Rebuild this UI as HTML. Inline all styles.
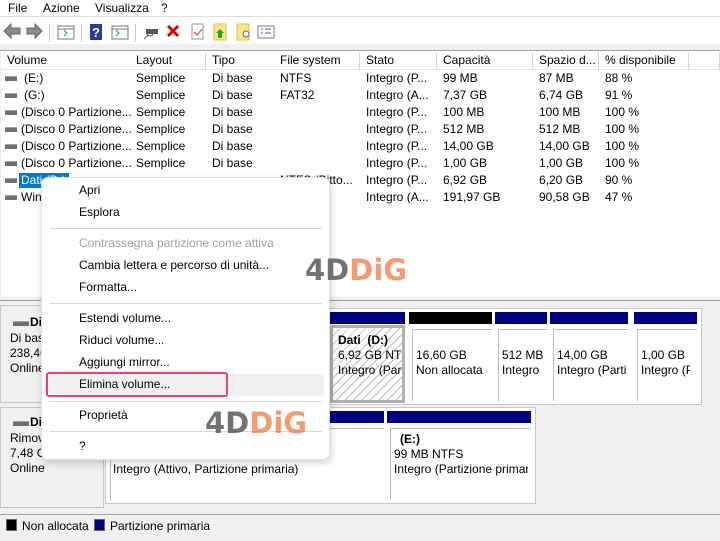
<!DOCTYPE html>
<html><head><meta charset="utf-8"><style>
*{margin:0;padding:0;box-sizing:border-box}
body{width:720px;height:541px;overflow:hidden;background:#f0f0f0;font-family:"Liberation Sans",sans-serif;font-size:12px;color:#000;position:relative}
.a{position:absolute;white-space:nowrap}
.hd{position:absolute;top:52px;height:18px;border-right:1px solid #d6d6d6;border-bottom:1px solid #e5e5e5;padding-left:6px;line-height:17px;background:#fff}
.drv{position:absolute;left:5px;width:12px;height:5px;background:#707070;border-top:1px solid #a0a0a0}
.mi{position:absolute;left:79px;font-size:12px}
.sep{position:absolute;left:50px;width:272px;height:1px;background:#d8d8d8}
.box{position:absolute;background:#fff;border:1px solid #a0a0a0;box-shadow:inset 1px 1px 0 #fff}
.part{position:absolute;background:#fff;border-left:1px solid #d0d0d0}
.nav{position:absolute;height:12px;background:#000080}
.wm{position:absolute;font-weight:bold;font-size:29px;letter-spacing:0px;font-family:"DejaVu Sans","Liberation Sans",sans-serif}
</style></head><body>
<!-- menu bar -->
<div class="a" style="left:0;top:0;width:720px;height:16px;background:#fff"></div>
<div class="a" style="left:8px;top:1px">File</div>
<div class="a" style="left:43px;top:1px">Azione</div>
<div class="a" style="left:95px;top:1px">Visualizza</div>
<div class="a" style="left:161px;top:1px">?</div>
<!-- toolbar -->
<div class="a" style="left:0;top:16px;width:720px;height:28px;background:#fff;border-top:1px solid #ddd"></div>
<svg class="a" style="left:0;top:18px" width="300" height="26">
<path d="M4 13 L11 6 L11 10 L20 10 L20 16 L11 16 L11 20 Z" fill="#8a8a8a" stroke="#666"/>
<path d="M42 13 L35 6 L35 10 L27 10 L27 16 L35 16 L35 20 Z" fill="#8a8a8a" stroke="#666"/>
<line x1="49.5" y1="6" x2="49.5" y2="24" stroke="#ccc"/>
<rect x="58" y="8" width="16" height="13" fill="#fff" stroke="#777"/><line x1="58" y1="11" x2="74" y2="11" stroke="#777"/><path d="M64 12 L67 15 L64 18" fill="none" stroke="#2a2"/>
<line x1="81.5" y1="6" x2="81.5" y2="24" stroke="#ccc"/>
<rect x="90" y="6" width="12" height="16" fill="#2a3a9a"/><text x="92" y="19" fill="#fff" font-size="13" font-weight="bold">?</text>
<rect x="112" y="8" width="16" height="13" fill="#fff" stroke="#777"/><line x1="112" y1="11" x2="128" y2="11" stroke="#777"/><path d="M116 12 L119 15 L116 18" fill="none" stroke="#2a2"/>
<line x1="135.5" y1="6" x2="135.5" y2="24" stroke="#ccc"/>
<rect x="146" y="11" width="12" height="5" fill="#555"/><circle cx="150" cy="15" r="3" fill="none" stroke="#468"/><line x1="148" y1="17" x2="144" y2="21" stroke="#555"/>
<path d="M168 8 L178 18 M178 8 L168 18" stroke="#d00" stroke-width="3"/>
<rect x="192" y="6" width="11" height="15" fill="#fff" stroke="#999"/><path d="M194 14 L197 17 L202 11" fill="none" stroke="#e55" stroke-width="1.3"/>
<rect x="214" y="6" width="12" height="16" fill="#fbe58a" stroke="#e0c040"/><path d="M220 11 L224 15 L222 15 L222 20 L218 20 L218 15 L216 15 Z" fill="#2a2"/>
<rect x="237" y="6" width="12" height="16" fill="#fbe58a" stroke="#e0c040"/><circle cx="246" cy="16" r="3" fill="#fff" stroke="#666"/>
<rect x="258" y="8" width="16" height="12" fill="#fff" stroke="#777"/><path d="M261 11 h2 M265 11 h6 M261 15 h2 M265 15 h6" stroke="#46a"/>
</svg>
<div class="a" style="left:0;top:44px;width:720px;height:7px;background:#f0f0f0;border-bottom:1px solid #a0a0a0"></div>
<!-- table -->
<div class="a" style="left:1px;top:51px;width:719px;height:246px;background:#fff"></div>
<div class="hd" style="left:1px;width:132px">Volume</div>
<div class="hd" style="left:130px;width:76px">Layout</div>
<div class="hd" style="left:206px;width:69px">Tipo</div>
<div class="hd" style="left:274px;width:86px">File system</div>
<div class="hd" style="left:360px;width:77px">Stato</div>
<div class="hd" style="left:437px;width:96px">Capacità</div>
<div class="hd" style="left:533px;width:66px">Spazio d...</div>
<div class="hd" style="left:599px;width:90px">% disponibile</div>
<div class="hd" style="left:689px;width:31px"></div>
<div class="a" style="left:0;top:70px;line-height:17px">
<div style="position:relative;height:17px"><div class="drv" style="top:6px"></div><span style="position:absolute;left:24px">(E:)</span><span style="position:absolute;left:136px">Semplice</span><span style="position:absolute;left:212px">Di base</span><span style="position:absolute;left:280px">NTFS</span><span style="position:absolute;left:366px">Integro (P...</span><span style="position:absolute;left:443px">99 MB</span><span style="position:absolute;left:539px">87 MB</span><span style="position:absolute;left:605px">88 %</span></div>
<div style="position:relative;height:17px"><div class="drv" style="top:6px"></div><span style="position:absolute;left:24px">(G:)</span><span style="position:absolute;left:136px">Semplice</span><span style="position:absolute;left:212px">Di base</span><span style="position:absolute;left:280px">FAT32</span><span style="position:absolute;left:366px">Integro (A...</span><span style="position:absolute;left:443px">7,37 GB</span><span style="position:absolute;left:539px">6,74 GB</span><span style="position:absolute;left:605px">91 %</span></div>
<div style="position:relative;height:17px"><div class="drv" style="top:6px"></div><span style="position:absolute;left:21px">(Disco 0 Partizione...</span><span style="position:absolute;left:136px">Semplice</span><span style="position:absolute;left:212px">Di base</span><span style="position:absolute;left:366px">Integro (P...</span><span style="position:absolute;left:443px">100 MB</span><span style="position:absolute;left:539px">100 MB</span><span style="position:absolute;left:605px">100 %</span></div>
<div style="position:relative;height:17px"><div class="drv" style="top:6px"></div><span style="position:absolute;left:21px">(Disco 0 Partizione...</span><span style="position:absolute;left:136px">Semplice</span><span style="position:absolute;left:212px">Di base</span><span style="position:absolute;left:366px">Integro (P...</span><span style="position:absolute;left:443px">512 MB</span><span style="position:absolute;left:539px">512 MB</span><span style="position:absolute;left:605px">100 %</span></div>
<div style="position:relative;height:17px"><div class="drv" style="top:6px"></div><span style="position:absolute;left:21px">(Disco 0 Partizione...</span><span style="position:absolute;left:136px">Semplice</span><span style="position:absolute;left:212px">Di base</span><span style="position:absolute;left:366px">Integro (P...</span><span style="position:absolute;left:443px">14,00 GB</span><span style="position:absolute;left:539px">14,00 GB</span><span style="position:absolute;left:605px">100 %</span></div>
<div style="position:relative;height:17px"><div class="drv" style="top:6px"></div><span style="position:absolute;left:21px">(Disco 0 Partizione...</span><span style="position:absolute;left:136px">Semplice</span><span style="position:absolute;left:212px">Di base</span><span style="position:absolute;left:366px">Integro (P...</span><span style="position:absolute;left:443px">1,00 GB</span><span style="position:absolute;left:539px">1,00 GB</span><span style="position:absolute;left:605px">100 %</span></div>
<div style="position:relative;height:17px"><div class="drv" style="top:6px"></div><span style="position:absolute;left:19px;top:1px;height:15px;line-height:15px;width:50px;background:#0078d7;color:#fff;padding-left:2px">Dati (D:)</span><span style="position:absolute;left:280px">NTFS (Bitto...</span><span style="position:absolute;left:366px">Integro (P...</span><span style="position:absolute;left:443px">6,92 GB</span><span style="position:absolute;left:539px">6,20 GB</span><span style="position:absolute;left:605px">90 %</span></div>
<div style="position:relative;height:17px"><div class="drv" style="top:6px"></div><span style="position:absolute;left:21px">Windows (C:)</span><span style="position:absolute;left:366px">Integro (A...</span><span style="position:absolute;left:443px">191,97 GB</span><span style="position:absolute;left:539px">90,58 GB</span><span style="position:absolute;left:605px">47 %</span></div>
</div>
<!-- divider -->
<div class="a" style="left:0;top:297px;width:720px;height:4px;background:#f0f0f0;border-bottom:1px solid #a0a0a0"></div>
<!-- disk 0 -->
<div class="a" style="left:0;top:305px;width:104px;height:98px;border:1px solid #c8c8c8;background:#f0f0f0"></div>
<div class="drv" style="left:13px;top:321px;width:16px"></div>
<div class="a" style="left:30px;top:315px;font-weight:bold">Disco 0</div>
<div class="a" style="left:10px;top:331px">Di base</div>
<div class="a" style="left:10px;top:346px">238,46 GB</div>
<div class="a" style="left:10px;top:361px">Online</div>
<div class="a" style="left:105px;top:308px;width:597px;height:97px;background:#fff;border:1px solid #c8c8c8"></div>
<div class="nav" style="left:107px;top:312px;width:298px"></div>
<div class="a" style="left:330px;top:325px;width:75px;height:78px;border:3px solid #b0b0b0;background:repeating-linear-gradient(135deg,#fff 0 5px,#bbb 5px 6px)"></div>
<div class="a" style="left:338px;top:333px;font-weight:bold">Dati&nbsp; (D:)</div>
<div class="a" style="left:338px;top:348px;width:64px;overflow:hidden">6,92 GB NTFS</div>
<div class="a" style="left:338px;top:363px;width:64px;overflow:hidden">Integro (Partizione</div>
<div class="nav" style="left:409px;top:312px;width:83px;background:#000"></div>
<div class="a" style="left:412px;top:329px;width:80px;height:72px;border:1px solid #bbb;border-right:none;border-bottom:none"></div>
<div class="a" style="left:416px;top:348px">16,60 GB</div>
<div class="a" style="left:416px;top:363px">Non allocata</div>
<div class="nav" style="left:495px;top:312px;width:52px"></div>
<div class="a" style="left:498px;top:329px;width:49px;height:72px;border:1px solid #bbb;border-right:none;border-bottom:none"></div>
<div class="a" style="left:502px;top:348px">512 MB</div>
<div class="a" style="left:502px;top:363px">Integro</div>
<div class="nav" style="left:550px;top:312px;width:78px"></div>
<div class="a" style="left:553px;top:329px;width:75px;height:72px;border:1px solid #bbb;border-right:none;border-bottom:none"></div>
<div class="a" style="left:557px;top:348px">14,00 GB</div>
<div class="a" style="left:557px;top:363px;width:70px;overflow:hidden">Integro (Partizione</div>
<div class="nav" style="left:634px;top:312px;width:63px"></div>
<div class="a" style="left:637px;top:329px;width:60px;height:72px;border:1px solid #bbb;border-right:none;border-bottom:none"></div>
<div class="a" style="left:641px;top:348px">1,00 GB</div>
<div class="a" style="left:641px;top:363px;width:49px;overflow:hidden">Integro (Partizione</div>
<!-- disk 1 -->
<div class="a" style="left:0;top:407px;width:104px;height:101px;border:1px solid #c8c8c8;background:#f0f0f0"></div>
<div class="drv" style="left:13px;top:421px;width:16px"></div>
<div class="a" style="left:30px;top:415px;font-weight:bold">Disco 1</div>
<div class="a" style="left:10px;top:431px">Rimovibile</div>
<div class="a" style="left:10px;top:446px">7,48 GB</div>
<div class="a" style="left:10px;top:461px">Online</div>
<div class="a" style="left:105px;top:407px;width:431px;height:97px;background:#fff;border:1px solid #c8c8c8"></div>
<div class="nav" style="left:107px;top:411px;width:277px"></div>
<div class="a" style="left:110px;top:428px;width:274px;height:72px;border:1px solid #bbb;border-right:none;border-bottom:none"></div>
<div class="a" style="left:113px;top:462px">Integro (Attivo, Partizione primaria)</div>
<div class="nav" style="left:387px;top:411px;width:144px"></div>
<div class="a" style="left:390px;top:428px;width:141px;height:72px;border:1px solid #bbb;border-right:none;border-bottom:none"></div>
<div class="a" style="left:400px;top:432px;font-weight:bold">(E:)</div>
<div class="a" style="left:394px;top:447px">99 MB NTFS</div>
<div class="a" style="left:394px;top:462px;width:134px;overflow:hidden">Integro (Partizione primaria)</div>
<!-- legend -->
<div class="a" style="left:0;top:514px;width:720px;height:1px;background:#a0a0a0"></div>
<div class="a" style="left:6px;top:519px;width:11px;height:12px;background:#000;border:1px solid #666"></div>
<div class="a" style="left:22px;top:519px">Non allocata</div>
<div class="a" style="left:94px;top:519px;width:11px;height:12px;background:#000080;border:1px solid #666"></div>
<div class="a" style="left:110px;top:519px">Partizione primaria</div>
<!-- context menu -->
<div class="a" style="left:41px;top:177px;width:289px;height:283px;background:#fff;border:1px solid #e2e2e2;border-radius:7px;box-shadow:1px 3px 8px rgba(0,0,0,.18)"></div>
<div class="mi" style="top:183px">Apri</div>
<div class="mi" style="top:205px">Esplora</div>
<div class="sep" style="top:228px"></div>
<div class="mi" style="top:236px;color:#a0a0a0">Contrassegna partizione come attiva</div>
<div class="mi" style="top:258px">Cambia lettera e percorso di unità...</div>
<div class="mi" style="top:280px">Formatta...</div>
<div class="sep" style="top:303px"></div>
<div class="mi" style="top:311px">Estendi volume...</div>
<div class="mi" style="top:333px">Riduci volume...</div>
<div class="mi" style="top:355px">Aggiungi mirror...</div>
<div class="a" style="left:48px;top:374px;width:276px;height:22px;background:#f0f0f0;border-radius:4px"></div>
<div class="a" style="left:46px;top:372px;width:182px;height:25px;border:2px solid #e8436a;border-radius:3px"></div>
<div class="mi" style="top:377px">Elimina volume...</div>
<div class="sep" style="top:401px"></div>
<div class="mi" style="top:408px">Proprietà</div>
<div class="sep" style="top:431px"></div>
<div class="mi" style="top:439px">?</div>
<!-- watermarks -->
<div class="wm" style="left:305px;top:253px"><span style="color:rgba(90,90,90,.85)">4D</span><span style="color:rgba(240,120,70,.75)">DiG</span></div>
<div class="wm" style="left:205px;top:406px"><span style="color:rgba(90,90,90,.85)">4D</span><span style="color:rgba(240,120,70,.75)">DiG</span></div>
</body></html>
